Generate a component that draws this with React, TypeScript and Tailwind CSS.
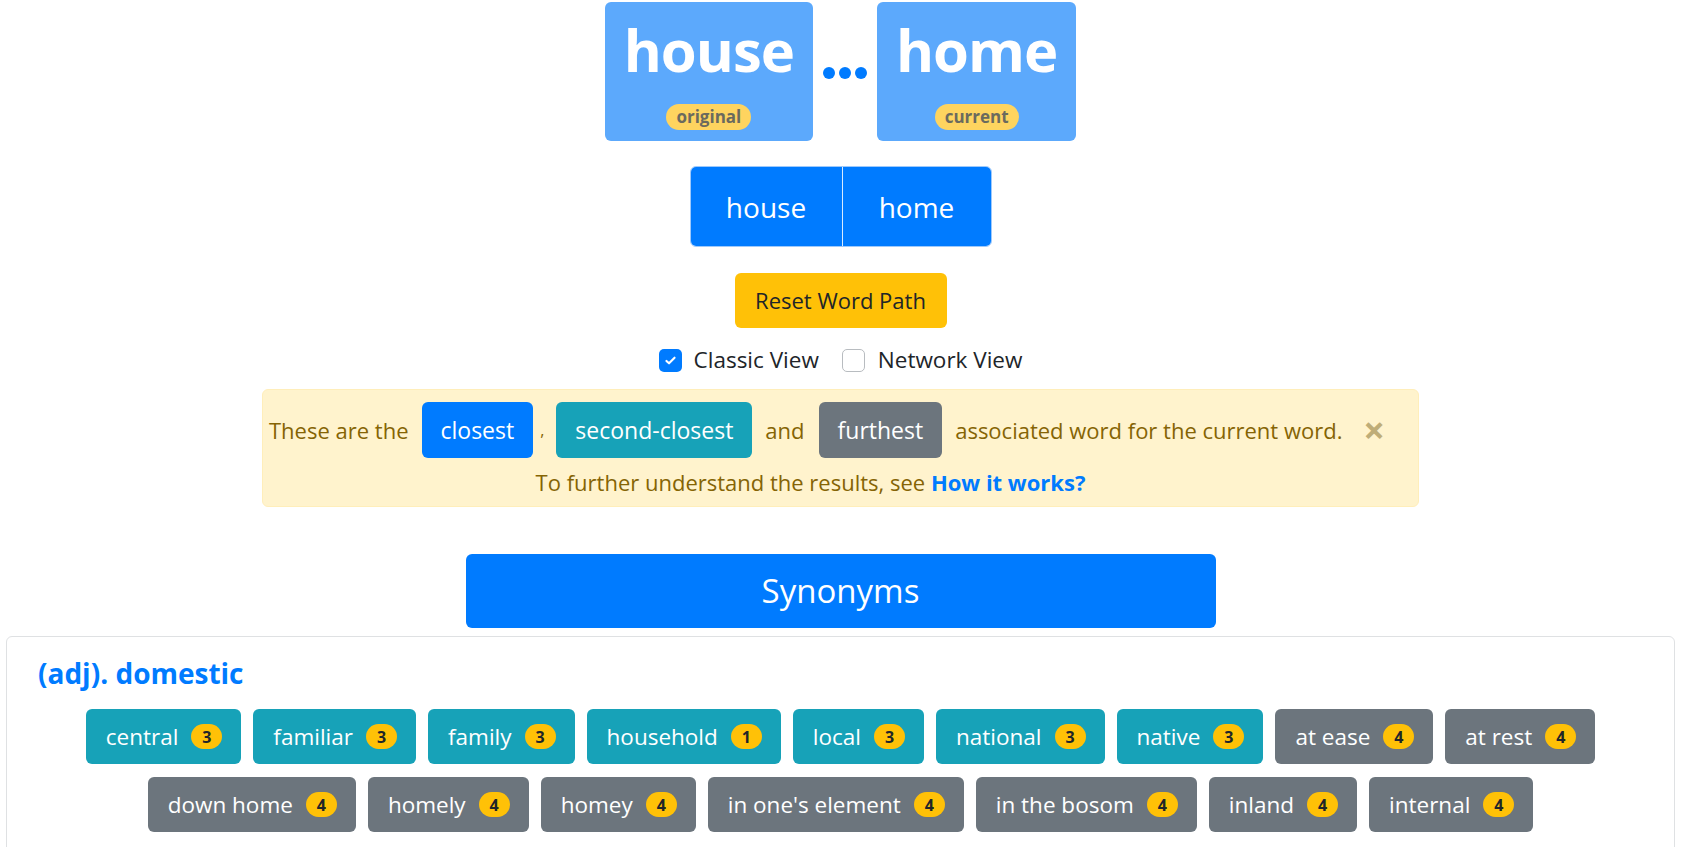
import React from "react";

type Syn = { word: string; rank: number };

const ROW_ONE: Syn[] = [
  { word: "central", rank: 3 },
  { word: "familiar", rank: 3 },
  { word: "family", rank: 3 },
  { word: "household", rank: 1 },
  { word: "local", rank: 3 },
  { word: "national", rank: 3 },
  { word: "native", rank: 3 },
  { word: "at ease", rank: 4 },
  { word: "at rest", rank: 4 },
];

const ROW_TWO: Syn[] = [
  { word: "down home", rank: 4 },
  { word: "homely", rank: 4 },
  { word: "homey", rank: 4 },
  { word: "in one's element", rank: 4 },
  { word: "in the bosom", rank: 4 },
  { word: "inland", rank: 4 },
  { word: "internal", rank: 4 },
];

function WordCard({ word, tag }: { word: string; tag: string }) {
  return (
    <div className="flex h-[139px] flex-col items-center rounded-md bg-[#5ca9fc] px-[19px] pt-[12px]">
      <span className="text-[58px] font-bold leading-[72px] tracking-[-1px] text-white">
        {word}
      </span>
      <span className="mt-[18px] rounded-full bg-[#fed45f] px-[10px] text-[17px] font-bold leading-[26px] text-[#6b6a5e]">
        {tag}
      </span>
    </div>
  );
}

function SynBadge({ word, rank }: Syn) {
  const tone = rank === 4 ? "bg-[#6c757d]" : "bg-[#17a2b8]";
  return (
    <span
      className={`flex h-[55px] items-center gap-[13px] whitespace-nowrap rounded-md pl-[20px] pr-[19px] text-[22.5px] text-white ${tone}`}
    >
      {word}
      <span className="flex h-[25px] w-[31px] items-center justify-center rounded-full bg-[#ffc107] text-[16px] font-bold text-[#212529]">
        {rank}
      </span>
    </span>
  );
}

export default function App() {
  return (
    <div className="min-h-screen bg-white font-['Segoe_UI','Open_Sans',sans-serif] text-[#212529]">
      <div className="flex items-center justify-center gap-[10px] pt-[2px]">
        <WordCard word="house" tag="original" />
        <div className="mt-[2px] flex gap-[4px]">
          <span className="h-[12px] w-[12px] rounded-full bg-[#007bff]" />
          <span className="h-[12px] w-[12px] rounded-full bg-[#007bff]" />
          <span className="h-[12px] w-[12px] rounded-full bg-[#007bff]" />
        </div>
        <WordCard word="home" tag="current" />
      </div>

      <div className="mt-[25px] flex justify-center">
        <div className="flex h-[81px] overflow-hidden rounded-md border border-[#9ec9fb] text-[28px] text-white">
          <button className="w-[152px] border-r border-[#d9ebff] bg-[#007bff]">house</button>
          <button className="w-[148px] bg-[#007bff]">home</button>
        </div>
      </div>

      <div className="mt-[26px] flex justify-center">
        <button className="h-[55px] w-[212px] rounded-md bg-[#ffc107] text-[22px] text-[#212529]">
          Reset Word Path
        </button>
      </div>

      <div className="mt-[17px] flex h-[30px] items-center justify-center text-[22.5px]">
        <span className="flex h-[23px] w-[23px] items-center justify-center rounded-[5px] bg-[#007bff]">
          <svg width="13" height="13" viewBox="0 0 16 16" fill="none">
            <path d="M3 8.5l3.2 3L13 4.5" stroke="#fff" strokeWidth="2.6" strokeLinecap="round" strokeLinejoin="round" />
          </svg>
        </span>
        <span className="ml-[12px]">Classic View</span>
        <span className="ml-[23px] h-[23px] w-[23px] rounded-[5px] border border-[#b8bcc0] bg-white" />
        <span className="ml-[13px]">Network View</span>
      </div>

      <div className="mt-[14px] flex justify-center">
        <div className="relative w-[1157px] rounded-md border border-[#ffeeba] bg-[#fff3cd] pb-[7px] pl-[6px] pr-[40px] pt-[12px] text-[22px] text-[#856404]">
          <div className="flex items-center whitespace-nowrap">
            <span className="shrink-0">These are the</span>
            <span className="ml-[13px] flex h-[56px] shrink-0 items-center rounded-md bg-[#007bff] px-[19px] text-[23px] text-white">
              closest
            </span>
            <span className="ml-[7px] shrink-0 text-[16px]">,</span>
            <span className="ml-[12px] flex h-[56px] shrink-0 items-center rounded-md bg-[#17a2b8] px-[19px] text-[23px] text-white">
              second-closest
            </span>
            <span className="ml-[13px] shrink-0">and</span>
            <span className="ml-[14px] flex h-[56px] shrink-0 items-center rounded-md bg-[#6c757d] px-[19px] text-[23px] text-white">
              furthest
            </span>
            <span className="ml-[13px] shrink-0">associated word for the current word.</span>
          </div>
          <div className="mt-[8px] pr-[26px] text-center">
            To further understand the results, see{" "}
            <a className="font-bold text-[#007bff]">How it works?</a>
          </div>
          <span className="absolute right-[33px] top-[20px] text-[38px] font-bold leading-none text-[#bfad78]">
            ×
          </span>
        </div>
      </div>

      <div className="mt-[47px] flex justify-center">
        <button className="h-[74px] w-[750px] rounded-md bg-[#007bff] text-[33px] text-white">
          Synonyms
        </button>
      </div>

      <div className="mx-[6px] mt-[8px] rounded-md border border-[#dfe1e3] px-[31px] pb-[40px] pt-[16px]">
        <h2 className="text-[28px] font-bold leading-[40px] text-[#007bff]">(adj). domestic</h2>
        <div className="mt-[16px] flex flex-col items-center gap-[13px]">
          <div className="flex justify-center gap-[12px]">
            {ROW_ONE.map((s) => (
              <SynBadge key={s.word} {...s} />
            ))}
          </div>
          <div className="flex justify-center gap-[12px]">
            {ROW_TWO.map((s) => (
              <SynBadge key={s.word} {...s} />
            ))}
          </div>
        </div>
      </div>
    </div>
  );
}
